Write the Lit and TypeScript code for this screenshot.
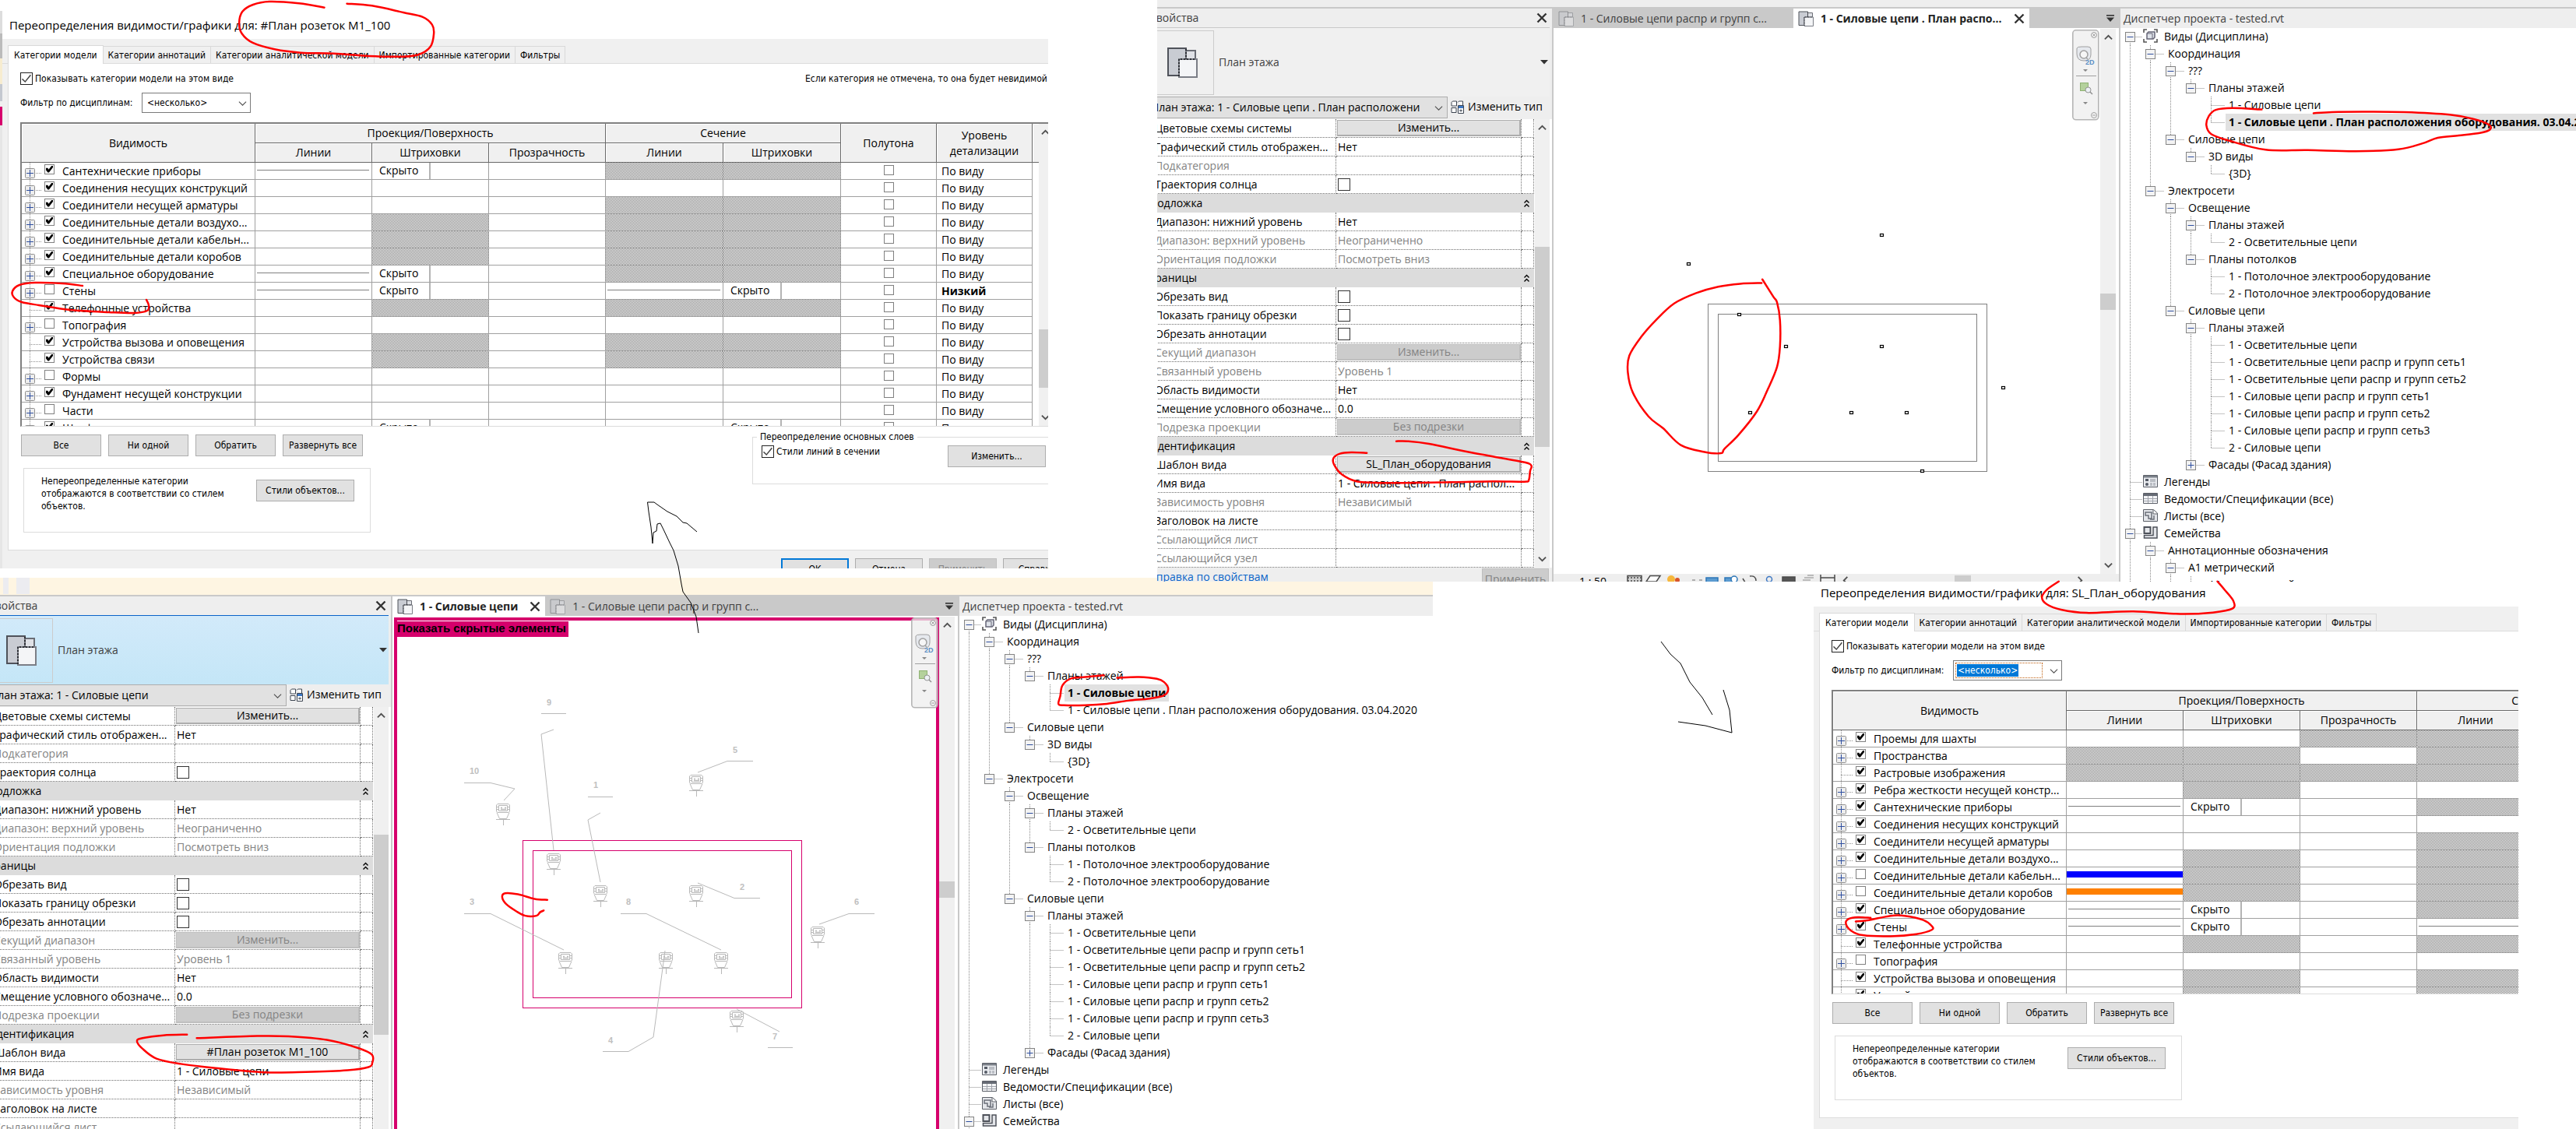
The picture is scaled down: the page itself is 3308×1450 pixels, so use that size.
import { LitElement, html, svg, css, nothing } from "lit";
import { customElement, property } from "lit/decorators.js";
import { classMap } from "lit/directives/class-map.js";

/* ---------- shared styles ---------- */

const base = css`
  :host {
    display: block;
    box-sizing: border-box;
    min-width: 0;
    min-height: 0;
    overflow: hidden;
    font-family: "Open Sans", "Noto Sans", sans-serif;
    font-size: 14px;
    line-height: 20px;
    color: #000;
  }
  * {
    box-sizing: border-box;
  }
  button,
  select,
  input {
    font: inherit;
    color: inherit;
    margin: 0;
    padding: 0;
    border-radius: 0;
  }
  svg {
    display: block;
    flex: none;
  }
  select {
    appearance: none;
    background: transparent;
    border: 0;
    min-width: 0;
    flex: 1;
  }
  input[type="checkbox"] {
    appearance: none;
    display: block;
    flex: none;
    width: 16px;
    height: 16px;
    border: 1px solid #333;
    background: #fff;
  }
  .scroll {
    display: flex;
    flex-direction: column;
    align-items: center;
    justify-content: space-between;
    background: #f0f0f0;
    padding: 6px 0;
    position: relative;
  }
  .thumb {
    position: absolute;
    left: 0;
    right: 0;
    background: #cdcdcd;
  }
`;

const chevron = (dir: "up" | "down" | "left" | "right", size = 11, color = "#505050", weight = 2) => {
  const d = {
    up: "M1 8 6 3 11 8",
    down: "M1 4 6 9 11 4",
    left: "M8 1 3 6 8 11",
    right: "M4 1 9 6 4 11",
  }[dir];
  return html`<svg width=${size} height=${size} viewBox="0 0 12 12" aria-hidden="true">
    <path d=${d} fill="none" stroke=${color} stroke-width=${weight} />
  </svg>`;
};

const closeIcon = (size = 14) => html`<svg class="close" width=${size} height=${size} viewBox="0 0 14 14" aria-hidden="true">
  <path d="M1.5 1.5 12.5 12.5M12.5 1.5 1.5 12.5" stroke="#333" stroke-width="2.4" />
</svg>`;

const planIcon = (size: number, faded = false) => html`<svg
  width=${size}
  height=${size}
  viewBox="0 0 40 40"
  opacity=${faded ? 0.45 : 1}
  aria-hidden="true"
>
  <path d="M2 2H25V16H16V37H2Z" fill="#c9ccd3" stroke="#4f525a" stroke-width="2" />
  <path d="M25 5H37V16H25Z" fill="#dfe1e6" stroke="#6a6d75" stroke-width="2" />
  <path d="M16 16H39V39H16Z" fill="#f4f5f7" stroke="#7b7e86" stroke-width="2" />
  <path d="M25 3V16M16 38V16H38" fill="none" stroke="#2b2d33" stroke-width="2" stroke-dasharray="2 2" />
</svg>`;

const downTriangle = html`<svg width="10" height="6" viewBox="0 0 10 6" aria-hidden="true">
  <path d="M0 0H10L5 5.5Z" fill="#333" />
</svg>`;

/* ---------- visibility / graphics dialog ---------- */

type Fill = "" | "x" | "line" | "hide" | "blue" | "orange";
interface Category {
  name: string;
  on: boolean;
  leaf?: boolean;
  fills: Fill[];
  detail?: string;
}

const cat = (name: string, on: boolean, fills: string, leaf = false, detail?: string): Category => ({
  name,
  on,
  leaf,
  detail,
  fills: fills.split(",") as Fill[],
});

const socketCategories: Category[] = [
  cat("Сантехнические приборы", true, "line,hide,,x,x"),
  cat("Соединения несущих конструкций", true, ",,,,"),
  cat("Соединители несущей арматуры", true, ",,,x,x"),
  cat("Соединительные детали воздухо...", true, ",x,,x,x"),
  cat("Соединительные детали кабельн...", true, ",x,,x,x"),
  cat("Соединительные детали коробов", true, ",x,,x,x"),
  cat("Специальное оборудование", true, "line,hide,,x,x"),
  cat("Стены", false, "line,hide,,line,hide", false, "Низкий"),
  cat("Телефонные устройства", true, ",x,,x,x", true),
  cat("Топография", false, ",,,,"),
  cat("Устройства вызова и оповещения", true, ",x,,x,x", true),
  cat("Устройства связи", true, ",x,,x,x", true),
  cat("Формы", false, ",,,,"),
  cat("Фундамент несущей конструкции", true, ",,,,"),
  cat("Части", false, ",,,,"),
  cat("Шкафы", true, ",hide,,,hide"),
];

const equipmentCategories: Category[] = [
  cat("Проемы для шахты", true, ",,x,x,x"),
  cat("Пространства", true, "x,x,,x,x"),
  cat("Растровые изображения", true, "x,x,x,x,x", true),
  cat("Ребра жесткости несущей констр...", true, ",x,,,"),
  cat("Сантехнические приборы", true, "line,hide,,x,x"),
  cat("Соединения несущих конструкций", true, ",,,,"),
  cat("Соединители несущей арматуры", true, ",,,x,x"),
  cat("Соединительные детали воздухо...", true, ",x,,x,x"),
  cat("Соединительные детали кабельн...", false, "blue,x,,x,x"),
  cat("Соединительные детали коробов", false, "orange,x,,x,x"),
  cat("Специальное оборудование", true, "line,hide,,x,x"),
  cat("Стены", true, "line,hide,,line,hide"),
  cat("Телефонные устройства", true, ",x,,x,x", true),
  cat("Топография", false, ",,,,"),
  cat("Устройства вызова и оповещения", true, ",x,,x,x", true),
  cat("Устройства связи", true, ",x,,x,x", true),
];

@customElement("visibility-dialog")
class VisibilityDialog extends LitElement {
  @property() template = "";
  @property({ type: Boolean, reflect: true }) compact = false;
  @property({ type: Boolean }) focused = false;
  @property({ attribute: false }) rows: Category[] = [];

  static styles = [
    base,
    css`
      :host {
        background: #f0f0f0;
        font-family: "DejaVu Sans Condensed", "Open Sans", sans-serif;
        font-size: 12px;
        line-height: 16px;
        white-space: nowrap;
      }
      .title {
        background: #fff;
        height: 50px;
        padding: 18px 0 0 9px;
        font-family: "Open Sans", "Noto Sans", sans-serif;
        font-size: 15px;
        font-weight: 400;
        line-height: 28px;
        margin: 0;
      }
      :host([compact]) .title {
        height: 32px;
        padding-top: 0;
      }
      .tabs {
        display: flex;
        align-items: flex-end;
        height: 32px;
        padding-left: 7px;
        border-bottom: 1px solid #dcdcdc;
      }
      .tab {
        width: auto;
        height: 22px;
        padding: 0 6px;
        background: #f0f0f0;
        border: 1px solid #d9d9d9;
        border-left: 0;
        border-bottom: 0;
      }
      .tab.active {
        height: 24px;
        padding: 0 7px;
        background: #fff;
        border-left: 1px solid #d9d9d9;
        margin-bottom: -1px;
      }
      .page {
        margin-left: 7px;
        padding: 10px 0 22px 15px;
        background: #fff;
        border-left: 1px solid #dcdcdc;
        border-bottom: 1px solid #dcdcdc;
      }
      .line {
        display: flex;
        align-items: center;
        height: 18px;
      }
      .check {
        display: flex;
        align-items: center;
        gap: 3px;
      }
      .show {
        flex: none;
        width: 1008px;
      }
      .check input {
        border-color: #222;
      }
      .check input:checked::before {
        content: "";
        display: block;
        width: 12px;
        height: 12px;
        margin: 1px;
        background: #444;
        clip-path: polygon(8% 48%, 0 58%, 36% 92%, 100% 14%, 90% 6%, 35% 74%);
      }
      .filter {
        display: flex;
        align-items: center;
        gap: 8px;
        margin-top: 9px;
      }
      .filter label {
        width: 148px;
      }
      .combo {
        display: flex;
        align-items: center;
        width: 140px;
        height: 26px;
        padding: 2px 4px 2px 2px;
        background: #fff;
        border: 1px solid #7a7a7a;
      }
      .combo select {
        height: 20px;
        padding-left: 4px;
      }
      .combo.focused select {
        flex: none;
        width: 112px;
        margin-right: 6px;
        padding-left: 2px;
        color: #fff;
        border: 1px dotted #c06010;
        outline: 0;
        background: linear-gradient(#0078d7, #0078d7) 1px 1px / 79px 16px no-repeat;
      }
      .combo svg {
        margin-left: auto;
      }
      .grid {
        display: flex;
        height: 391px;
        margin-top: 12px;
        overflow: hidden;
        border: 2px solid #808080;
        border-width: 2px 0 1px 2px;
        border-bottom-color: #dcdcdc;
        font-family: "Open Sans", "Noto Sans", sans-serif;
        font-size: 14px;
      }
      table {
        flex: none;
        width: 1306px;
        table-layout: fixed;
        border-collapse: separate;
        border-spacing: 0;
      }
      th {
        padding: 0;
        font-weight: 400;
        line-height: 20px;
        background: #f0f0f0;
        border: 1px solid #696969;
        border-width: 0 1px 1px 0;
        box-shadow: inset 1px 1px #fff;
      }
      tr.top th,
      tr.sub th {
        height: 25px;
      }
      th.blank {
        border-right: 0;
      }
      td {
        height: 22px;
        padding: 0;
        border: 1px solid #a0a0a0;
        border-width: 0 1px 1px 0;
        vertical-align: middle;
        line-height: 20px;
      }
      td.blank {
        border: 0;
      }
      td.x {
        background: repeating-conic-gradient(#808080 0 25%, #fff 0 50%) 0 0 / 2px 2px;
      }
      .name {
        display: flex;
        align-items: center;
        height: 21px;
      }
      .name label {
        padding-left: 10px;
      }
      td input[type="checkbox"] {
        width: 13px;
        height: 13px;
        border-color: #808080;
      }
      .name input {
        margin-bottom: 4px;
      }
      .name input:checked::before {
        content: "";
        display: block;
        width: 9px;
        height: 9px;
        margin: 1px;
        background: #000;
        clip-path: polygon(0 30%, 26% 30%, 38% 52%, 80% 0, 100% 0, 100% 22%, 44% 94%, 26% 94%, 0 62%);
      }
      td.half input {
        margin: 0 auto 2px;
      }
      .stroke {
        height: 1px;
        margin: 0 3px 2px 2px;
        background: #808080;
      }
      .bar {
        height: 8px;
        margin-bottom: 3px;
      }
      .blue {
        background: #0000ff;
      }
      .orange {
        background: #ff8000;
      }
      .hide {
        width: 75px;
        height: 21px;
        padding-left: 9px;
        border-right: 2px solid #b4b4b4;
      }
      .detail {
        padding-left: 6px;
      }
      .detail.strong {
        font-weight: 700;
      }
      .scroll {
        flex: none;
        width: 17px;
      }
      .thumb {
        top: 68%;
        height: 75px;
      }
      .lower {
        display: flex;
        align-items: flex-start;
      }
      .left {
        flex: none;
        width: 940px;
      }
      .actions {
        display: flex;
        gap: 9px;
        padding: 10px 0 0 1px;
      }
      button {
        height: 28px;
        width: 103px;
        background: #e1e1e1;
        border: 1px solid #adadad;
      }
      button.wide {
        width: 126px;
      }
      .note {
        display: flex;
        justify-content: space-between;
        width: 446px;
        height: 83px;
        margin: 15px 0 0 4px;
        padding: 8px 20px 0 22px;
        border: 1px solid #dcdcdc;
      }
      .note p {
        width: 250px;
        margin: 0;
        white-space: normal;
      }
      .note button {
        margin-top: 6px;
      }
      fieldset {
        display: flex;
        align-items: flex-start;
        flex: none;
        width: 400px;
        height: 69px;
        margin: 5px 0 0;
        padding: 3px 0 0 11px;
        border: 1px solid #dcdcdc;
      }
      legend {
        padding: 0 4px;
        margin-left: -6px;
      }
      fieldset .check {
        width: 239px;
      }
      .footer {
        display: flex;
        gap: 8px;
        padding: 10px 0 0 1000px;
      }
      .footer button {
        flex: none;
        width: 87px;
      }
      .footer .default {
        border: 2px solid #0078d7;
      }
      button:disabled {
        color: #838383;
        background: #cccccc;
        border-color: #bfbfbf;
      }
    `,
  ];

  private cell(fill: Fill) {
    if (fill === "x") return html`<td class="x"></td>`;
    if (fill === "line") return html`<td><div class="stroke"></div></td>`;
    if (fill === "hide") return html`<td><div class="hide">Скрыто</div></td>`;
    if (fill === "blue" || fill === "orange")
      return html`<td><div class=${classMap({ bar: true, [fill]: true })}></div></td>`;
    return html`<td></td>`;
  }

  private branch(leaf?: boolean) {
    return html`<svg width="29" height="22" aria-hidden="true">
      <path d="M10.5 0V22M10 13.5H26" stroke="#909090" stroke-dasharray="1 1" fill="none" />
      ${leaf
        ? nothing
        : svg`<rect x="4.5" y="7.5" width="12" height="12" rx="1" fill="#ededed" stroke="#909090" />
            <path d="M6 13.5H15M10.5 9V18" stroke="#2f4f9f" />`}
    </svg>`;
  }

  render() {
    return html`
      <h2 class="title">Переопределения видимости/графики для: ${this.template}</h2>
      <div class="tabs" role="tablist">
        <button class="tab active" role="tab">Категории модели</button>
        ${["Категории аннотаций", "Категории аналитической модели", "Импортированные категории", "Фильтры"].map(
          (t) => html`<button class="tab" role="tab">${t}</button>`
        )}
      </div>
      <div class="page">
        <div class="line">
          <div class="check show">
            <input type="checkbox" id="show" checked /><label for="show"
              >Показывать категории модели на этом виде</label
            >
          </div>
          ${this.compact ? nothing : html`<span>Если категория не отмечена, то она будет невидимой</span>`}
        </div>
        <div class="filter">
          <label for="filter">Фильтр по дисциплинам:</label>
          <div class=${classMap({ combo: true, focused: this.focused })}>
            <select id="filter">
              <option>&lt;несколько&gt;</option>
            </select>
            ${chevron("down", 11, "#505050", 1.2)}
          </div>
        </div>
        <div class="grid">
          <table>
            <colgroup>
              ${[300, 150, 150, 150, 151, 151, 123, 123, 8].map((w) => html`<col width=${w} />`)}
            </colgroup>
            <thead>
              <tr class="top">
                <th rowspan="2">Видимость</th>
                <th colspan="3">Проекция/Поверхность</th>
                <th colspan="2">Сечение</th>
                <th rowspan="2">Полутона</th>
                <th rowspan="2">Уровень<br />детализации</th>
                <th rowspan="2" class="blank"></th>
              </tr>
              <tr class="sub">
                ${["Линии", "Штриховки", "Прозрачность", "Линии", "Штриховки"].map((t) => html`<th>${t}</th>`)}
              </tr>
            </thead>
            <tbody>
              ${this.rows.map(
                (r, i) => html`<tr>
                  <td>
                    <div class="name">
                      ${this.branch(r.leaf)}<input type="checkbox" id="c${i}" ?checked=${r.on} /><label for="c${i}"
                        >${r.name}</label
                      >
                    </div>
                  </td>
                  ${r.fills.map((f) => this.cell(f))}
                  <td class="half"><input type="checkbox" aria-label="Полутона" /></td>
                  <td class=${classMap({ detail: true, strong: !!r.detail })}>${r.detail ?? "По виду"}</td>
                  <td class="blank"></td>
                </tr>`
              )}
            </tbody>
          </table>
          <div class="scroll">${chevron("up")}<div class="thumb"></div>${chevron("down")}</div>
        </div>
        <div class="lower">
          <div class="left">
            <div class="actions">
              <button>Все</button><button>Ни одной</button><button>Обратить</button><button>Развернуть все</button>
            </div>
            <div class="note">
              <p>Непереопределенные категории отображаются в соответствии со стилем объектов.</p>
              <button class="wide">Стили объектов...</button>
            </div>
          </div>
          ${this.compact
            ? nothing
            : html`<fieldset>
                <legend>Переопределение основных слоев</legend>
                <div class="check"><input type="checkbox" id="cut" checked /><label for="cut">Стили линий в сечении</label></div>
                <button class="wide">Изменить...</button>
              </fieldset>`}
        </div>
      </div>
      ${this.compact
        ? nothing
        : html`<div class="footer">
            <button class="default">ОК</button><button>Отмена</button><button disabled>Применить</button
            ><button>Справка</button>
          </div>`}
    `;
  }
}

/* ---------- properties palette ---------- */

type Prop =
  | { kind: "head"; label: string }
  | { kind: "text" | "button"; label: string; value: string; off?: boolean }
  | { kind: "check"; label: string };

const head = (label: string): Prop => ({ kind: "head", label });
const text = (label: string, value = "", off = false): Prop => ({ kind: "text", label, value, off });
const push = (label: string, value: string, off = false): Prop => ({ kind: "button", label, value, off });
const check = (label: string): Prop => ({ kind: "check", label });

const propsFor = (template: string, view: string): Prop[] => [
  push("Цветовые схемы системы", "Изменить..."),
  text("Графический стиль отображен...", "Нет"),
  text("Подкатегория", "", true),
  check("Траектория солнца"),
  head("Подложка"),
  text("Диапазон: нижний уровень", "Нет"),
  text("Диапазон: верхний уровень", "Неограниченно", true),
  text("Ориентация подложки", "Посмотреть вниз", true),
  head("Границы"),
  check("Обрезать вид"),
  check("Показать границу обрезки"),
  check("Обрезать аннотации"),
  push("Секущий диапазон", "Изменить...", true),
  text("Связанный уровень", "Уровень 1", true),
  text("Область видимости", "Нет"),
  text("Смещение условного обозначе...", "0.0"),
  push("Подрезка проекции", "Без подрезки", true),
  head("Идентификация"),
  push("Шаблон вида", template),
  text("Имя вида", view),
  text("Зависимость уровня", "Независимый", true),
  text("Заголовок на листе"),
  text("Ссылающийся лист", "", true),
  text("Ссылающийся узел", "", true),
];

@customElement("properties-palette")
class PropertiesPalette extends LitElement {
  @property() template = "";
  @property() view = "";
  @property() instance = "";
  @property({ type: Boolean, reflect: true }) active = false;

  static styles = [
    base,
    css`
      :host {
        display: flex;
        justify-content: flex-end;
        background: #eeeeee;
        white-space: nowrap;
      }
      .palette {
        flex: none;
        width: 520px;
      }
      header {
        display: flex;
        align-items: center;
        justify-content: space-between;
        height: 25px;
        margin-right: 3px;
        padding: 0 3px;
        color: #404040;
        border-bottom: 1px solid #c8c8c8;
      }
      :host([active]) header {
        border-bottom-color: #0a64c8;
      }
      .type {
        display: flex;
        align-items: center;
        gap: 6px;
        height: 88px;
        margin-right: 3px;
        padding: 2px 2px 2px 0;
        color: #404040;
        background: #f0f0f0;
      }
      :host([active]) .type {
        background: linear-gradient(#d2eafa, #c4e6f7);
      }
      .thumbnail {
        display: flex;
        align-items: center;
        justify-content: center;
        width: 86px;
        height: 83px;
        padding-left: 4px;
        border: 1px solid #cccccc;
      }
      .type > svg {
        margin-left: auto;
      }
      .pick {
        display: flex;
        gap: 4px;
        height: 29px;
      }
      .combo {
        display: flex;
        align-items: center;
        width: 386px;
        height: 28px;
        padding: 0 5px 0 4px;
        background: #e1e1e1;
        border: 1px solid #adadad;
      }
      .edit {
        display: flex;
        align-items: center;
        gap: 5px;
        height: 26px;
        border: 0;
        background: transparent;
      }
      .body {
        display: flex;
        gap: 1px;
        background: #fff;
      }
      table {
        flex: none;
        width: 497px;
        table-layout: fixed;
        border-collapse: separate;
        border-spacing: 0;
      }
      td,
      th {
        height: 24px;
        padding: 0 0 0 2px;
        font-weight: 400;
        text-align: left;
        vertical-align: middle;
        border: 1px dotted #6e6e6e;
        border-width: 0 1px 1px 0;
      }
      th {
        padding-left: 10px;
      }
      .off {
        color: #838383;
      }
      .head th {
        padding-left: 3px;
        background: #dcdcdc;
        border: 0;
      }
      .fold {
        display: flex;
        align-items: center;
        justify-content: space-between;
        padding-right: 6px;
      }
      .value {
        display: block;
        width: calc(100% + 1px);
        height: 21px;
        margin-left: -1px;
        text-align: center;
        line-height: 18px;
        background: #e1e1e1;
        border: 1px solid #adadad;
        border-right-width: 2px;
        border-bottom-width: 2px;
      }
      .value:disabled {
        color: #838383;
        background: #cccccc;
        border-color: #bfbfbf;
      }
      .scroll {
        flex: none;
        width: 19px;
      }
      .thumb {
        top: 164px;
        height: 257px;
      }
      footer {
        display: flex;
        align-items: flex-start;
        justify-content: space-between;
        padding: 1px 4px 2px 3px;
      }
      footer a {
        color: #0a64c8;
        text-decoration: none;
        line-height: 22px;
      }
      footer button {
        width: 86px;
        height: 28px;
        line-height: 26px;
        color: #838383;
        background: #cccccc;
        border: 1px solid #bfbfbf;
      }
    `,
  ];

  private row(p: Prop, i: number) {
    if (p.kind === "head")
      return html`<tr class="head">
        <th colspan="3">
          <div class="fold">
            ${p.label}<svg width="7" height="11" viewBox="0 0 7 11" aria-hidden="true">
              <path d="M.5 4.5 3.5 1.5 6.5 4.5M.5 9.5 3.5 6.5 6.5 9.5" fill="none" stroke="#000" stroke-width="1.4" />
            </svg>
          </div>
        </th>
      </tr>`;
    const off = p.kind !== "check" && !!p.off;
    return html`<tr>
      <th scope="row" class=${classMap({ off })}>
        ${p.kind === "check" ? html`<label for="p${i}">${p.label}</label>` : p.label}
      </th>
      <td class=${classMap({ off })}>
        ${p.kind === "check"
          ? html`<input type="checkbox" id="p${i}" />`
          : p.kind === "button"
            ? html`<button class="value" ?disabled=${off}>${p.value}</button>`
            : p.value}
      </td>
      <td></td>
    </tr>`;
  }

  render() {
    return html`<div class="palette">
      <header>Свойства ${closeIcon()}</header>
      <div class="type">
        <div class="thumbnail">${planIcon(40)}</div>
        <span>План этажа</span>
        ${downTriangle}
      </div>
      <div class="pick">
        <div class="combo">
          <select aria-label="Экземпляр">
            <option>${this.instance}</option>
          </select>
          ${chevron("down", 11, "#505050", 1.2)}
        </div>
        <button class="edit">
          <svg width="17" height="17" viewBox="0 0 17 17" aria-hidden="true">
            <path d="M1 2.5 2.5 1H7.5V7H1ZM9 2.5 10.5 1H15.5V6M1 9.5H7V15.5H1Z" fill="#fff" stroke="#3c4450" />
            <path d="M9.5 6.5H16.5V16.5H9.5Z" fill="#fff" stroke="#3c4450" />
            <path d="M10 7H16V10H10Z" fill="#3d78c4" />
            <path d="M11 13H15M13 11.5V14.5" stroke="#3c4450" />
          </svg>
          Изменить тип
        </button>
      </div>
      <div class="body">
        <table>
          <colgroup>
            <col width="243" />
            <col width="238" />
            <col width="16" />
          </colgroup>
          <tbody>
            ${propsFor(this.template, this.view).map((p, i) => this.row(p, i))}
          </tbody>
        </table>
        <div class="scroll">${chevron("up")}<div class="thumb"></div>${chevron("down")}</div>
      </div>
      <footer><a href="#help">Справка по свойствам</a><button disabled>Применить</button></footer>
    </div>`;
  }
}

/* ---------- project browser ---------- */

interface Node {
  level: number;
  label: string;
  icon?: string;
  state?: "open" | "closed";
}

const outline = `
-0 Виды (Дисциплина)|views
-1 Координация
-2 ???
-3 Планы этажей
 4 1 - Силовые цепи
 4 1 - Силовые цепи . План расположения оборудования. 03.04.2020
-2 Силовые цепи
-3 3D виды
 4 {3D}
-1 Электросети
-2 Освещение
-3 Планы этажей
 4 2 - Осветительные цепи
-3 Планы потолков
 4 1 - Потолочное электрооборудование
 4 2 - Потолочное электрооборудование
-2 Силовые цепи
-3 Планы этажей
 4 1 - Осветительные цепи
 4 1 - Осветительные цепи распр и групп сеть1
 4 1 - Осветительные цепи распр и групп сеть2
 4 1 - Силовые цепи распр и групп сеть1
 4 1 - Силовые цепи распр и групп сеть2
 4 1 - Силовые цепи распр и групп сеть3
 4 2 - Силовые цепи
+3 Фасады (Фасад здания)
 0 Легенды|legend
 0 Ведомости/Спецификации (все)|schedule
 0 Листы (все)|sheet
-0 Семейства|family
-1 Аннотационные обозначения
-2 А1 метрический
 3 А1 метрический`;

const nodes: Node[] = outline
  .split("\n")
  .filter((l) => l)
  .map((l) => {
    const [label, icon] = l.slice(3).split("|");
    return {
      level: Number(l[1]),
      label,
      icon,
      state: l[0] === "-" ? "open" : l[0] === "+" ? "closed" : undefined,
    };
  });

/* The family list goes on below the last loaded node, so outer levels stay open. */
const hasNext = (i: number, level: number) => {
  for (let k = i + 1; k < nodes.length; k++) {
    if (nodes[k].level < level) return false;
    if (nodes[k].level === level) return true;
  }
  return level < 3;
};

const treeIcons: Record<string, unknown> = {
  views: svg`<path d="M1 5V1H5M14 1H18V5M18 13V17H14M5 17H1V13" fill="none" stroke="#555" stroke-width="1.6" />
    <path d="M5 6 7 4H15V11L13 13H5Z" fill="#dfe3ea" stroke="#667" stroke-width="1.5" /><path d="M5 6H12V13" fill="none" stroke="#667" />`,
  legend: svg`<path d="M.5 1.5H18.5V16.5H.5Z" fill="#e9ebef" stroke="#5c6068" /><path d="M1 2H18V4.5H1Z" fill="#7b8089" />
    <path d="M3 6H7V9H3Z" fill="#555b66" /><circle cx="5" cy="13" r="2" fill="#555b66" />
    <path d="M9 7H16M9 9H16M9 12H12M13 12H16M9 14H12M13 14H16" stroke="#8a8f98" />`,
  schedule: svg`<path d="M.5 2.5H18.5V15.5H.5Z" fill="#f4f5f7" stroke="#5c6068" /><path d="M1 3H18V6H1Z" fill="#666b75" />
    <path d="M1 9.5H18M1 12.5H18M6.5 6V15M12.5 6V15" stroke="#a0a4ac" />`,
  sheet: svg`<path d="M.5 1.5H13.5L18.5 6V16.5H.5Z" fill="#e4e6ea" stroke="#5c6068" /><path d="M13 2V7H18" fill="#fff" stroke="#5c6068" />
    <path d="M3 5H11V13H7V9H3ZM14 9V14H9" fill="none" stroke="#6b7079" stroke-width="1.5" />`,
  family: svg`<path d="M1.5 2H9.5V10H1.5Z" fill="#e4e6ea" stroke="#4d5159" stroke-width="2" /><path d="M13 2H18V16H1.5V12.5H13Z" fill="#e4e6ea" stroke="#4d5159" stroke-width="1.5" />`,
};

@customElement("project-browser")
class ProjectBrowser extends LitElement {
  @property() current = "";

  static styles = [
    base,
    css`
      :host {
        background: #fff;
        white-space: nowrap;
      }
      header {
        height: 25px;
        padding-left: 4px;
        line-height: 25px;
        color: #404040;
        background: #eeeeee;
      }
      ul {
        margin: 0;
        padding: 0;
        list-style: none;
      }
      li {
        display: flex;
        height: 22px;
      }
      .label {
        padding: 0 4px;
        line-height: 22px;
      }
      .current {
        font-weight: 700;
        background: #e1e1e1;
      }
      .icon {
        margin: 1px 4px 0 0;
      }
    `,
  ];

  private guides(n: Node, i: number) {
    const x = (level: number) => 12.5 + 26 * level;
    const c = x(n.level);
    const end = n.icon ? c + 15 : c + 17;
    const lines: string[] = [];
    for (let l = 0; l < n.level; l++) if (hasNext(i, l)) lines.push(`M${x(l)} 0V22`);
    if (i > 0) lines.push(`M${c} 0V11`);
    if (hasNext(i, n.level)) lines.push(`M${c} 11V22`);
    lines.push(`M${c} 11.5H${end}`);
    return html`<svg width=${end + 1.5} height="22" aria-hidden="true">
      <path d=${lines.join("")} fill="none" stroke="#888" stroke-dasharray="1 1" />
      ${n.state
        ? svg`<rect x=${c - 6} y="5.5" width="12" height="12" fill="#f3f3f3" stroke="#848484" />
            <path d="M${c - 4} 11.5H${c + 4}${n.state === "closed" ? `M${c} 7.5V15.5` : ""}" stroke="#2f4f9f" />`
        : nothing}
    </svg>`;
  }

  render() {
    return html`<header>Диспетчер проекта - tested.rvt</header>
      <ul role="tree">
        ${nodes.map(
          (n, i) => html`<li role="treeitem">
            ${this.guides(n, i)}
            ${n.icon ? html`<svg class="icon" width="19" height="18" aria-hidden="true">${treeIcons[n.icon]}</svg>` : nothing}
            <span class=${classMap({ label: true, current: n.level === 4 && n.label === this.current && i < 6 })}
              >${n.label}</span
            >
          </li>`
        )}
      </ul>`;
  }
}

/* ---------- drawing views ---------- */

const sockets = [[421, 266], [173, 303], [238, 368], [298, 409], [421, 409], [577, 462], [252, 494], [382, 494], [453, 494], [473, 569]];

const planDrawing = svg`
  <g fill="none" stroke="#808080">
    <rect x="198.5" y="354.5" width="358" height="215" />
    <rect x="211.5" y="367.5" width="332" height="189" />
  </g>
  ${sockets.map(([x, y]) => svg`<rect x=${x - 1.5} y=${y - 1.5} width="4" height="3" fill="#fff" stroke="#000" stroke-width="1.2" />`)}`;

const devices = [[142, 241], [390, 204], [207, 305], [267, 346], [390, 346], [222, 432], [351, 432], [422, 432], [546, 399], [442, 507]];
const tags: [string, number, number][] = [
  ["9", 201, 115], ["5", 440, 176], ["10", 105, 203], ["1", 261, 221], ["3", 102, 371],
  ["8", 303, 371], ["2", 449, 352], ["6", 596, 371], ["4", 280, 549], ["7", 491, 544],
];

const hiddenDrawing = svg`
  <g fill="none" stroke="#d6006c">
    <rect x="167.5" y="288.5" width="358" height="215" />
    <rect x="180.5" y="301.5" width="332" height="189" />
  </g>
  <g fill="none" stroke="#b9b9b9">
    <path d="M191 125.5H223M207 146 191 152 207 301M463 186.5H430L392 201M92 214.5H126L157 222 143 237
      M251 232.5H283M267 253 251 262 267 342M472 362.5H439L392 343M92 382.5H126L220 429M293 382.5H326L422 429
      M619 382.5H586L548 396M270 559.5H303L335 541 350 430M482 554.5H514M497 534 442 505" />
    ${devices.map(
      ([x, y]) => svg`<g transform="translate(${x} ${y})">
        <path d="M-7 .5H7L8.500 2V10L7 11.500H-7L-8.500 10V2Z" />
        <path d="M-5.500 2.500H5.500V9.500H-5.500ZM-9 4.500H-5M-9 7.500H-5M5 4.500H9M5 7.500H9M-8 11.500 -4.500 19.500H4.500L8 11.500M-9 20.500H9M.5 20V28" />
        <path d="M-3 5.500H-1M2 5.500H4M-3 7.500H4" stroke-width="1.5" />
      </g>`
    )}
  </g>
  <g fill="#c0c0c0" font-family="Liberation Sans, sans-serif" font-size="11" font-weight="700" text-anchor="middle">
    ${tags.map(([t, x, y]) => svg`<text x=${x} y=${y}>${t}</text>`)}
  </g>`;

@customElement("drawing-view")
class DrawingView extends LitElement {
  @property({ type: Boolean, reflect: true }) hiddenmode = false;

  static styles = [
    base,
    css`
      :host {
        display: flex;
        flex-direction: column;
        background: #fff;
        white-space: nowrap;
      }
      .tabs {
        display: flex;
        flex: none;
        height: 25px;
        background: #c9c9c9;
      }
      .tab {
        display: flex;
        align-items: center;
        gap: 9px;
        height: 25px;
        padding: 0 6px;
        border: 0;
        color: #404040;
        background: transparent;
      }
      .tab.idle {
        padding-right: 34px;
      }
      .tab.active {
        color: #222;
        font-weight: 700;
        background: #fff;
      }
      .tab .close {
        margin-left: 6px;
      }
      .more {
        margin: 8px 6px 0 auto;
      }
      .body {
        display: flex;
        flex: 1;
        min-height: 0;
      }
      .canvas {
        position: relative;
        flex: 1;
        min-width: 0;
        overflow: hidden;
      }
      .sheet {
        position: absolute;
        inset: 0;
        width: 100%;
        height: 100%;
      }
      :host([hiddenmode]) .canvas {
        padding: 2px 0 0 2px;
      }
      .frame {
        height: 100%;
      }
      :host([hiddenmode]) .frame {
        border: 4px solid #d6006c;
        border-bottom: 0;
      }
      .banner {
        display: inline-block;
        height: 20px;
        padding-right: 3px;
        font: 700 15px/17px "Liberation Sans", Arial, sans-serif;
        background: #d6006c;
      }
      .nav {
        position: absolute;
        top: 2px;
        right: 1px;
      }
      .scroll {
        flex: none;
        width: 20px;
        margin: 1px 4px 0 0;
      }
      .thumb {
        top: 340px;
        height: 21px;
      }
      .status {
        display: flex;
        align-items: flex-start;
        flex: none;
        height: 10px;
        overflow: hidden;
        background: #eeeeee;
      }
      .scale {
        width: 94px;
        padding: 0 0 0 33px;
        line-height: 20px;
      }
      .track {
        display: flex;
        align-items: flex-start;
        gap: 134px;
        padding-top: 3px;
      }
      .grip {
        width: 21px;
        height: 16px;
        margin-top: -1px;
        background: #cdcdcd;
      }
    `,
  ];

  private nav() {
    return html`<svg class="nav" width="35" height="117" aria-hidden="true">
      <rect x=".8" y=".8" width="33" height="115" rx="4" fill="#eeeeee" fill-opacity=".75" stroke="#b5b5b5" stroke-width="1.6" />
      <g fill="none" stroke="#a0a0a0">
        <circle cx="28" cy="7" r="3.5" /><path d="M26.5 5.5 29.5 8.5M29.5 5.5 26.5 8.5" />
        <circle cx="28" cy="110" r="3.5" /><path d="M26 110H30" />
        <path d="M6 24Q6 22 12 22H20Q24 22 24 25V32Q24 40 15 40 6 40 6 31Z" fill="#e6e9ee" />
        <circle cx="15" cy="32" r="5" fill="#f6f6f6" stroke-width="1.5" /><path d="M18 36 20 38" stroke-width="1.5" />
        <path d="M5 59.5H31" />
      </g>
      <text x="17" y="45" fill="#5b8fc4" font-family="Liberation Sans, sans-serif" font-size="9" font-weight="700">2D</text>
      <path d="M14 51H20L17 54ZM14 93H20L17 96Z" fill="#888" />
      <rect x="10.5" y="68.5" width="10" height="10" fill="#b4d19c" stroke="#8fb274" />
      <circle cx="20.5" cy="77.5" r="3.5" fill="#eef2f6" stroke="#909090" /><path d="M23 80 26 83" stroke="#909090" stroke-width="1.5" />
    </svg>`;
  }

  private statusIcons() {
    return html`<svg width="276" height="18" aria-hidden="true">
      <g fill="none" stroke="#4a4a4a" stroke-width="1.5">
        <path d="M1 2.5H19V16H1Z" fill="#d0d0d0" />
        <path d="M1 5H19M1 9H19" stroke-dasharray="2 2" />
        <path d="M25 10 30 2.5H43L38 10ZM25 10V16H38V10" fill="#fff" />
        <path d="M84 8H88M93 8H97" stroke="#999" />
        <path d="M102 5H117V14H102Z" stroke="#2e77b8" fill="#5b9bd0" />
        <path d="M126 5H138V14H126Z" stroke="#2e77b8" fill="#5b9bd0" />
        <circle cx="138" cy="7" r="4" stroke="#2e77b8" fill="#fff" />
        <path d="M149 6 154 14M158 3Q166 2 166 9" />
        <circle cx="183" cy="7" r="3.5" stroke="#3d78c4" />
        <path d="M200 4H216V14H200Z" fill="#555" />
        <path d="M226 8H236M228 5H240M232 2H240" stroke="#aaa" />
        <path d="M249 1V16M267 1V16M249 5H267" />
      </g>
      <circle cx="57" cy="7" r="5" fill="#f6b73c" />
      <circle cx="65" cy="8" r="3" fill="#d8552b" />
    </svg>`;
  }

  render() {
    const mode = this.hiddenmode;
    const idle = html`<button class="tab idle">${planIcon(20, true)}1 - Силовые цепи распр и групп с...</button>`;
    const active = html`<button class="tab active">
      ${planIcon(20)}${mode ? "1 - Силовые цепи" : "1 - Силовые цепи . План распо..."}${closeIcon()}
    </button>`;
    return html`<div class="tabs">
        ${mode ? [active, idle] : [idle, active]}
        <svg class="more" width="10" height="9" aria-hidden="true">
          <path d="M0 .8H10" stroke="#333" stroke-width="1.6" /><path d="M0 3.5H10L5 9Z" fill="#333" />
        </svg>
      </div>
      <div class="body">
        <div class="canvas">
          <div class="frame">${mode ? html`<span class="banner">Показать скрытые элементы</span>` : nothing}</div>
          <svg class="sheet" aria-hidden="true">${mode ? hiddenDrawing : planDrawing}</svg>
          ${this.nav()}
        </div>
        <div class="scroll">${chevron("up")}<div class="thumb"></div>${mode ? nothing : chevron("down")}</div>
      </div>
      ${mode
        ? nothing
        : html`<div class="status">
            <span class="scale">1 : 50</span>${this.statusIcons()}
            <div class="track">${chevron("left")}<div class="grip"></div>${chevron("right")}</div>
          </div>`}`;
  }
}

/* ---------- application window ---------- */

@customElement("cad-window")
class CadWindow extends LitElement {
  @property({ type: Boolean, reflect: true }) hiddenmode = false;
  @property() template = "";
  @property() view = "";
  @property() instance = "";
  @property() current = "";

  static styles = [
    base,
    css`
      :host {
        display: flex;
        flex-direction: column;
      }
      .ribbon {
        display: flex;
        gap: 10px;
        flex: none;
        height: 9px;
        padding-left: 4px;
        background: #eeeeee;
      }
      :host([hiddenmode]) .ribbon {
        height: 22px;
        background: #fef5e2;
      }
      .chip {
        width: 7px;
        height: 21px;
        background: #ececf0;
      }
      .chip.big {
        width: 17px;
      }
      .panes {
        display: grid;
        grid-template-columns: minmax(0, 507fr) minmax(0, 728fr) minmax(0, 587fr);
        flex: 1;
        min-height: 0;
        border-top: 2px solid #c9c9c9;
      }
      :host([hiddenmode]) .panes {
        grid-template-columns: minmax(0, 502fr) minmax(0, 728fr) minmax(0, 610fr);
      }
      drawing-view,
      project-browser {
        border-left: 2px solid #c9c9c9;
      }
    `,
  ];

  render() {
    return html`<div class="ribbon">
        ${this.hiddenmode ? html`<span class="chip"></span><span class="chip big"></span>` : nothing}
      </div>
      <div class="panes">
        <properties-palette
          ?active=${this.hiddenmode}
          .template=${this.template}
          .view=${this.view}
          .instance=${this.instance}
        ></properties-palette>
        <drawing-view ?hiddenmode=${this.hiddenmode}></drawing-view>
        <project-browser .current=${this.current}></project-browser>
      </div>`;
  }
}

/* ---------- hand-drawn marks ---------- */

const smooth = (flat: string) => {
  const n = flat.trim().split(/[\s,]+/).map(Number);
  const p: number[][] = [];
  for (let i = 0; i < n.length; i += 2) p.push([n[i], n[i + 1]]);
  let d = `M${p[0]}`;
  for (let i = 0; i < p.length - 1; i++) {
    const a = p[i - 1] ?? p[i];
    const b = p[i];
    const c = p[i + 1];
    const e = p[i + 2] ?? c;
    d += `C${b[0] + (c[0] - a[0]) / 6} ${b[1] + (c[1] - a[1]) / 6} ${c[0] - (e[0] - b[0]) / 6} ${c[1] - (e[1] - b[1]) / 6} ${c[0]} ${c[1]}`;
  }
  return d;
};

const loops: [string, string][] = [
  ["scale(.4464 .3333)", "933,29 860,13 775,6 728,18 697,45 688,90 696,130 727,165 790,190 865,203 960,206 1060,216 1160,218 1205,210 1238,180 1248,130 1243,95 1215,65 1160,48 1070,22 998,14"],
  ["", "106,367 80,364 45,363 25,366 16,374 18,382 28,388 50,392 90,398 140,401 172,402 189,399 191,392 188,385"],
  ["translate(1470 370) scale(.3444 .3333)", "828,635 770,633 728,638 704,655 706,680 735,718 790,745 860,750 960,751 1150,748 1300,745 1415,746 1432,740 1437,705 1442,685 1420,672 1330,655 1200,630 1060,600 980,590 938,590"],
  ["translate(2700 0) scale(.3877 .4783)", "527,294 430,290 375,295 352,312 344,337 360,360 420,378 540,402 680,403 840,406 980,401 1060,385 1110,370 1180,364 1250,357 1283,348 1280,335 1230,320 1150,308 1000,301 860,300 760,301 699,304"],
  ["translate(1980 0) scale(.4719 .4783)", "600,750 630,797 640,812 648,860 648,930 640,985 615,1045 585,1105 535,1168 497,1205 487,1217 440,1213 378,1195 330,1150 290,1118 248,1055 234,1000 238,955 270,905 310,860 360,815 420,787 480,770 540,762 598,760"],
  ["translate(0 740) scale(.4464 .4529)", "538,1300 470,1302 410,1310 394,1318 410,1340 450,1368 520,1383 620,1395 760,1407 880,1406 1000,1401 1060,1392 1071,1380 1070,1357 1030,1338 940,1315 830,1305 740,1304 566,1310"],
  ["translate(500 740) scale(.4719 .4529)", "430,918 395,915 350,902 315,899 307,910 318,930 345,950 370,963 400,963 410,953 420,948"],
  ["translate(1210 740) scale(.4592 .4529)", "452,281 400,286 360,290 336,310 330,340 325,362 340,366 400,366 460,362 520,353 580,347 620,338 632,320 620,300 600,291 550,286 489,288"],
  ["translate(2320 740) scale(.5995 .4529)", "540,15 515,38 504,60 515,80 545,95 600,104 700,100 800,107 870,103 912,92 914,70 895,38 880,15"],
  ["translate(2320 740) scale(.5995 .4529)", "137,969 110,967 90,972 84,985 95,1005 120,1018 180,1021 235,1015 268,1003 268,992 250,975 210,963 180,963 130,976 105,979"],
];

/* ---------- collage ---------- */

@customElement("app-root")
class AppRoot extends LitElement {
  static styles = [
    base,
    css`
      :host {
        position: relative;
        display: grid;
        grid-template-columns:
          minmax(0, 3fr) minmax(0, 1343fr) minmax(0, 140fr) minmax(0, 354fr) minmax(0, 489fr)
          minmax(0, 905fr) minmax(0, 74fr);
        grid-template-rows: minmax(0, 730fr) minmax(0, 12fr) minmax(0, 5fr) minmax(0, 703fr);
        height: 100vh;
        background: #fff;
      }
      .edge {
        grid-area: 1 / 1;
        background: linear-gradient(
          #fff 0 14px,
          #dddddd 0 43px,
          #bbbbbb 0 75px,
          #f7ecd0 0 108px,
          #c4c8d0 0 130px,
          #f0f0f0 0 137px,
          #d6006c 0 161px,
          #e6e6e6 0
        );
      }
      .sockets-dialog {
        grid-area: 1 / 2;
      }
      .sockets-window {
        grid-area: 3 / 1 / 5 / 5;
      }
      .equipment-window {
        grid-area: 1 / 4 / 4 / 8;
        z-index: 1;
      }
      .equipment-dialog {
        grid-area: 4 / 6;
      }
      .ink {
        position: absolute;
        inset: 0;
        width: 100%;
        height: 100%;
        z-index: 2;
        pointer-events: none;
      }
    `,
  ];

  render() {
    return html`
      <div class="edge"></div>
      <visibility-dialog class="sockets-dialog" template="#План розеток М1_100" .rows=${socketCategories}></visibility-dialog>
      <cad-window
        class="sockets-window"
        hiddenmode
        template="#План розеток М1_100"
        view="1 - Силовые цепи"
        instance="План этажа: 1 - Силовые цепи"
        current="1 - Силовые цепи"
      ></cad-window>
      <cad-window
        class="equipment-window"
        template="SL_План_оборудования"
        view="1 - Силовые цепи . План распол..."
        instance="План этажа: 1 - Силовые цепи . План расположени"
        current="1 - Силовые цепи . План расположения оборудования. 03.04.2020"
      ></cad-window>
      <visibility-dialog
        class="equipment-dialog"
        compact
        focused
        template="SL_План_оборудования"
        .rows=${equipmentCategories}
      ></visibility-dialog>
      <svg class="ink" viewBox="0 0 3308 1450" preserveAspectRatio="none" fill="none" aria-hidden="true">
        <g stroke="#ff0000" stroke-width="2.5" stroke-linecap="round">
          ${loops.map(([t, p]) => svg`<path transform=${t || nothing} vector-effect="non-scaling-stroke" d=${smooth(p)} />`)}
        </g>
        <g stroke="#000">
          <path
            d="M895 683 882 672 877 671 869 663 857 657 844 648 840 645H831.5L833 657 836 677 838 698 839 684 843 682 844 673 848 672 852 680 860 697 865 707 871 727 875 750 877 760 887 774 894 792 897 813"
          />
          <path d="M2133 824 2145 840 2158 852 2170 876 2186 896 2199 918M2155 927 2190 932 2224 941 2221 912 2213 886" />
        </g>
      </svg>
    `;
  }
}
